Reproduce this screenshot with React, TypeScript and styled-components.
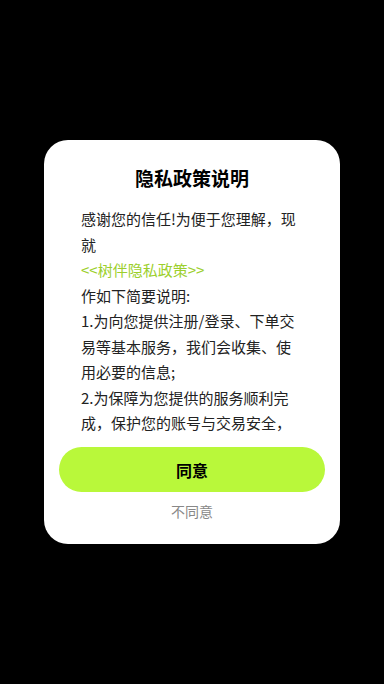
import React from 'react'
import styled, { createGlobalStyle } from 'styled-components'

const GlobalStyle = createGlobalStyle`
  html, body {
    margin: 0;
    padding: 0;
    background: #000;
  }
  body {
    font-family: "Noto Sans CJK SC", "Noto Sans", sans-serif;
  }
`

const Screen = styled.div`
  width: 384px;
  height: 684px;
  display: flex;
  align-items: center;
  justify-content: center;
  background: #000;
`

const Card = styled.div`
  width: 296px;
  height: 404px;
  box-sizing: border-box;
  background: #fff;
  border-radius: 24px;
  padding: 25px 15px 23px;
  display: flex;
  flex-direction: column;
  align-items: center;
`

const Title = styled.h2`
  margin: 0;
  font-size: 19px;
  line-height: 26px;
  font-weight: 700;
  color: #000;
`

const Body = styled.div`
  margin-top: 15px;
  height: 230px;
  width: 222px;
  overflow: hidden;
  font-size: 15px;
  line-height: 25.5px;
  color: #222;
`

const Para = styled.p`
  margin: 0;
`

const Link = styled.p`
  margin: 0;
  color: #9ccf2c;
`

const AgreeButton = styled.button`
  margin-top: 11px;
  width: 266px;
  height: 45px;
  border: none;
  border-radius: 23px;
  background: #b9f83a;
  font-family: inherit;
  font-size: 16px;
  font-weight: 700;
  color: #000;
`

const Decline = styled.div`
  margin-top: 9px;
  font-size: 14px;
  line-height: 20px;
  color: #888;
`

export default function App() {
  return (
    <>
      <GlobalStyle />
      <Screen>
        <Card>
          <Title>隐私政策说明</Title>
          <Body>
            <Para>感谢您的信任!为便于您理解，现就</Para>
            <Link>&lt;&lt;树伴隐私政策&gt;&gt;</Link>
            <Para>作如下简要说明:</Para>
            <Para>1.为向您提供注册/登录、下单交易等基本服务，我们会收集、使用必要的信息;</Para>
            <Para>2.为保障为您提供的服务顺利完成，保护您的账号与交易安全，我们会申请必要的设备权限;</Para>
          </Body>
          <AgreeButton>同意</AgreeButton>
          <Decline>不同意</Decline>
        </Card>
      </Screen>
    </>
  )
}
